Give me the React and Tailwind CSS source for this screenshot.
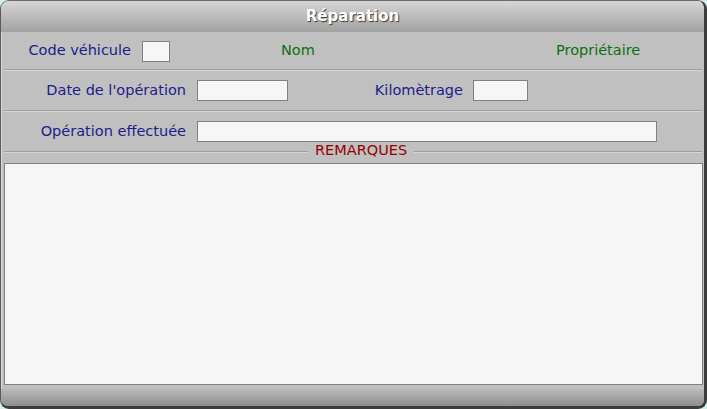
const Field = ({ className = "" }) => (
  <div className={`h-[21px] border border-[#808080] bg-[#f6f6f6] ${className}`}></div>
);

const Separator = () => (
  <div className="ml-[3px] mr-[2px] h-[2px] border-t border-t-[#9e9e9e] border-b border-b-[#d6d6d6]"></div>
);

export default function App() {
  return (
    <div className="w-[707px] h-[409px] bg-[#d6ecea]" style={{ fontFamily: '"DejaVu Sans", Verdana, sans-serif' }}>
      <div className="w-[707px] h-[409px] flex flex-col overflow-hidden rounded-[9px] border-t border-l border-r-[3px] border-b-[3px] border-t-[#6a6a6a] border-l-[#5c5c5c] border-r-[#3c3c3c] border-b-[#3c3c3c] bg-[#c0c0c0] shadow-[inset_1px_0_0_#d8d8d8]">
        {/* Titre */}
        <div className="h-[31px] shrink-0 flex items-center justify-center bg-gradient-to-b from-[#d6d6d6] to-[#a2a2a2]">
          <span className="text-white font-bold text-[15px] [text-shadow:1px_1px_1px_#3a3a3a]">Réparation</span>
        </div>

        {/* Ligne 1 */}
        <div className="h-[37px] shrink-0 flex items-center text-[14.5px] pt-[1px]">
          <div className="w-[130px] text-right text-[#1c1c8c] whitespace-nowrap">Code véhicule</div>
          <Field className="ml-[11px] w-[28px]" />
          <div className="ml-[111px] w-[275px] text-[#0c700c]">Nom</div>
          <div className="text-[#0c700c]">Propriétaire</div>
        </div>
        <Separator />

        {/* Ligne 2 */}
        <div className="h-[39px] shrink-0 flex items-center text-[14.5px]">
          <div className="w-[185px] text-right text-[#1c1c8c] whitespace-nowrap">Date de l'opération</div>
          <Field className="ml-[11px] w-[91px]" />
          <div className="w-[175px] text-right text-[#1c1c8c]">Kilomètrage</div>
          <Field className="ml-[10px] w-[55px]" />
        </div>
        <Separator />

        {/* Ligne 3 */}
        <div className="h-[39px] shrink-0 flex items-center text-[14.5px]">
          <div className="w-[185px] text-right text-[#1c1c8c] whitespace-nowrap">Opération effectuée</div>
          <Field className="ml-[11px] w-[460px]" />
        </div>

        {/* Remarques */}
        <div className="h-[12px] shrink-0 flex items-start ml-[3px] mr-[2px]">
          <div className="w-[304px] h-[2px] border-t border-t-[#9e9e9e] border-b border-b-[#d6d6d6]"></div>
          <span className="-mt-[9px] px-[7px] text-[14.5px] leading-[17px] text-[#960000]">REMARQUES</span>
          <div className="flex-1 h-[2px] border-t border-t-[#9e9e9e] border-b border-b-[#d6d6d6]"></div>
        </div>
        <div className="h-[222px] shrink-0 ml-[3px] mr-[1px] border border-[#808080] bg-[#f6f6f6]"></div>

        {/* Pied */}
        <div className="mt-[4px] h-[17px] shrink-0 bg-gradient-to-b from-[#bababa] to-[#8e8e8e]"></div>
      </div>
    </div>
  );
}
